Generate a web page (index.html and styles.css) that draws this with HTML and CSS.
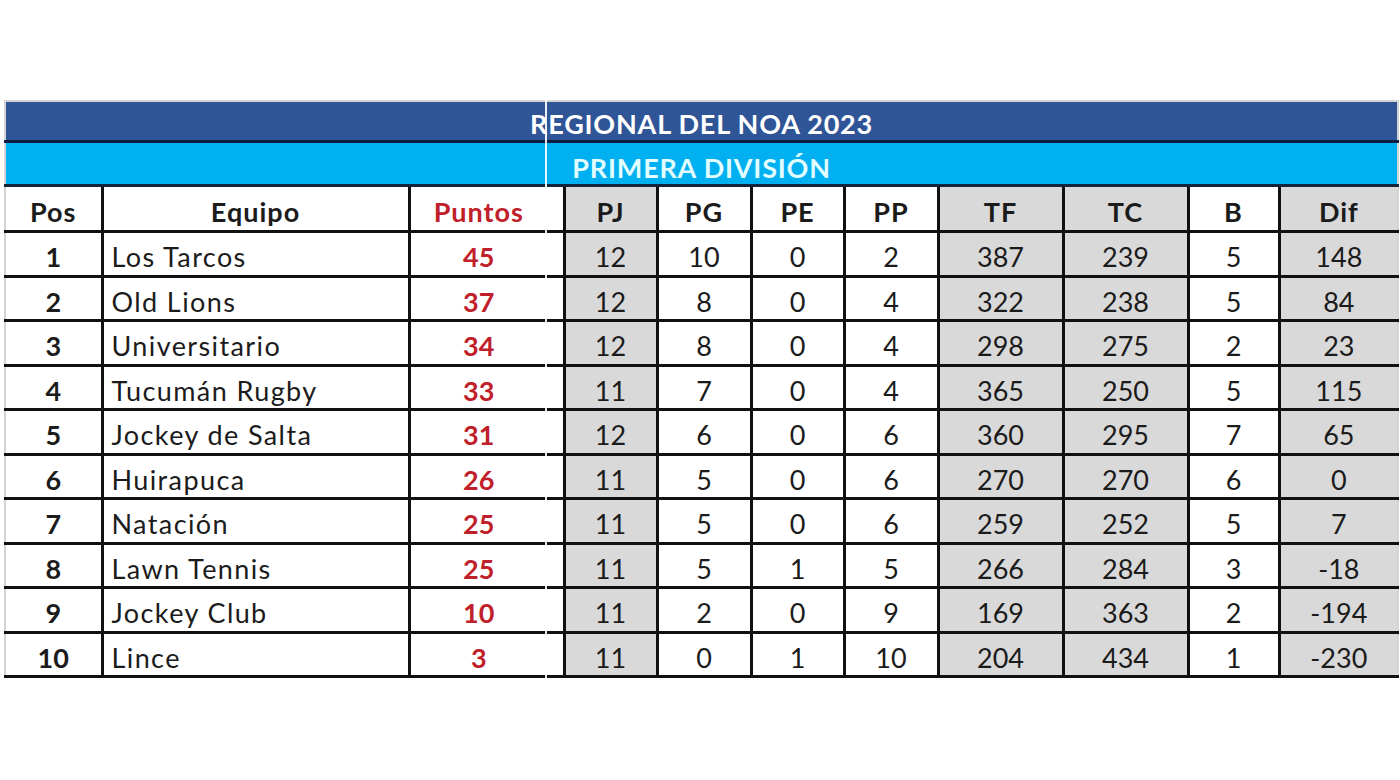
FILE: index.html
```html
<!DOCTYPE html>
<html lang="es">
<head>
<meta charset="utf-8">
<title>Regional del NOA 2023</title>
<link rel="stylesheet" href="styles.css">
</head>
<body>
<div class="page">
  <div class="sheet">
    <table class="standings">
      <colgroup>
        <col class="c-pos"><col class="c-team"><col class="c-pts"><col class="c-gap">
        <col class="c-pj"><col class="c-pg"><col class="c-pe"><col class="c-pp">
        <col class="c-tf"><col class="c-tc"><col class="c-b"><col class="c-dif">
      </colgroup>
      <thead>
        <tr class="title-1"><th colspan="12">REGIONAL DEL NOA 2023</th></tr>
        <tr class="title-2"><th colspan="12">PRIMERA DIVISIÓN</th></tr>
        <tr class="heads">
          <th class="first">Pos</th><th>Equipo</th><th class="pts">Puntos</th><th class="gap"></th>
          <th class="grey">PJ</th><th>PG</th><th>PE</th><th>PP</th>
          <th class="grey">TF</th><th class="grey">TC</th><th>B</th><th class="grey last">Dif</th>
        </tr>
      </thead>
      <tbody>
        <tr><td class="first pos">1</td><td class="team">Los Tarcos</td><td class="pts">45</td><td class="gap"></td><td class="grey">12</td><td>10</td><td>0</td><td>2</td><td class="grey">387</td><td class="grey">239</td><td>5</td><td class="grey last">148</td></tr>
        <tr><td class="first pos">2</td><td class="team">Old Lions</td><td class="pts">37</td><td class="gap"></td><td class="grey">12</td><td>8</td><td>0</td><td>4</td><td class="grey">322</td><td class="grey">238</td><td>5</td><td class="grey last">84</td></tr>
        <tr><td class="first pos">3</td><td class="team">Universitario</td><td class="pts">34</td><td class="gap"></td><td class="grey">12</td><td>8</td><td>0</td><td>4</td><td class="grey">298</td><td class="grey">275</td><td>2</td><td class="grey last">23</td></tr>
        <tr><td class="first pos">4</td><td class="team">Tucumán Rugby</td><td class="pts">33</td><td class="gap"></td><td class="grey">11</td><td>7</td><td>0</td><td>4</td><td class="grey">365</td><td class="grey">250</td><td>5</td><td class="grey last">115</td></tr>
        <tr><td class="first pos">5</td><td class="team">Jockey de Salta</td><td class="pts">31</td><td class="gap"></td><td class="grey">12</td><td>6</td><td>0</td><td>6</td><td class="grey">360</td><td class="grey">295</td><td>7</td><td class="grey last">65</td></tr>
        <tr><td class="first pos">6</td><td class="team">Huirapuca</td><td class="pts">26</td><td class="gap"></td><td class="grey">11</td><td>5</td><td>0</td><td>6</td><td class="grey">270</td><td class="grey">270</td><td>6</td><td class="grey last">0</td></tr>
        <tr><td class="first pos">7</td><td class="team">Natación</td><td class="pts">25</td><td class="gap"></td><td class="grey">11</td><td>5</td><td>0</td><td>6</td><td class="grey">259</td><td class="grey">252</td><td>5</td><td class="grey last">7</td></tr>
        <tr><td class="first pos">8</td><td class="team">Lawn Tennis</td><td class="pts">25</td><td class="gap"></td><td class="grey">11</td><td>5</td><td>1</td><td>5</td><td class="grey">266</td><td class="grey">284</td><td>3</td><td class="grey last">-18</td></tr>
        <tr><td class="first pos">9</td><td class="team">Jockey Club</td><td class="pts">10</td><td class="gap"></td><td class="grey">11</td><td>2</td><td>0</td><td>9</td><td class="grey">169</td><td class="grey">363</td><td>2</td><td class="grey last">-194</td></tr>
        <tr><td class="first pos">10</td><td class="team">Lince</td><td class="pts">3</td><td class="gap"></td><td class="grey">11</td><td>0</td><td>1</td><td>10</td><td class="grey">204</td><td class="grey">434</td><td>1</td><td class="grey last">-230</td></tr>
      </tbody>
    </table>
    <div class="seam"></div>
  </div>
</div>
</body>
</html>
```

FILE: styles.css
```css
html, body {
  margin: 0;
  padding: 0;
  background: #ffffff;
}

.page {
  width: 1400px;
  height: 780px;
  padding: 100px 0 0 4px;
  box-sizing: border-box;
}

.sheet {
  position: relative;
  width: 1393px;
}

.standings {
  width: 1393px;
  table-layout: fixed;
  border-collapse: collapse;
  font-family: Lato, "Liberation Sans", sans-serif;
  font-size: 27px;
  color: #1b1b1b;
  border-top: 2px solid #d4d4d4;
}

.c-pos { width: 97px; }
.c-team { width: 307px; }
.c-pts { width: 138px; }
.c-gap { width: 17px; }
.c-pj { width: 93px; }
.c-pg { width: 94px; }
.c-pe { width: 93px; }
.c-pp { width: 94px; }
.c-tf { width: 125px; }
.c-tc { width: 125px; }
.c-b { width: 91px; }
.c-dif { width: 119px; }

.standings th,
.standings td {
  padding: 0;
  text-align: center;
  vertical-align: middle;
  line-height: 1;
  border: 3px solid #111111;
  white-space: nowrap;
}

.title-1 th {
  height: 33px;
  padding-top: 5px;
  background: #2f5597;
  color: #ffffff;
  font-weight: 700;
  letter-spacing: 0.8px;
  border-left: 2px solid #d4d4d4;
  border-right: 2px solid #d4d4d4;
  border-top: 0;
  border-bottom: 3px solid #0e1c3f;
}

.title-2 th {
  height: 34px;
  padding-top: 7px;
  background: #00b0f0;
  color: #e2fdff;
  font-weight: 700;
  letter-spacing: 0.8px;
  border-left: 2px solid #d4d4d4;
  border-right: 2px solid #d4d4d4;
  border-bottom: 3px solid #14253a;
}

.heads th {
  height: 37px;
  padding-top: 6px;
  font-weight: 700;
  font-size: 27px;
  letter-spacing: 1px;
}

.standings tbody td {
  height: 35.5px;
  padding-top: 6px;
}

.standings .first {
  border-left: 2px solid #d4d4d4;
}

.standings .last {
  border-right: 2px solid #d4d4d4;
}

.standings .gap {
  border-left-style: hidden;
}

.standings .grey {
  background: #d9d9d9;
}

.standings .pts {
  color: #c0202a;
  font-weight: 700;
}

.standings .pos {
  font-weight: 700;
}

.standings td.team {
  text-align: left;
  padding-left: 8px;
  letter-spacing: 1.4px;
}

.seam {
  position: absolute;
  left: 541px;
  top: 0;
  bottom: 0;
  width: 2px;
  background: rgba(255, 255, 255, 0.9);
}
```
